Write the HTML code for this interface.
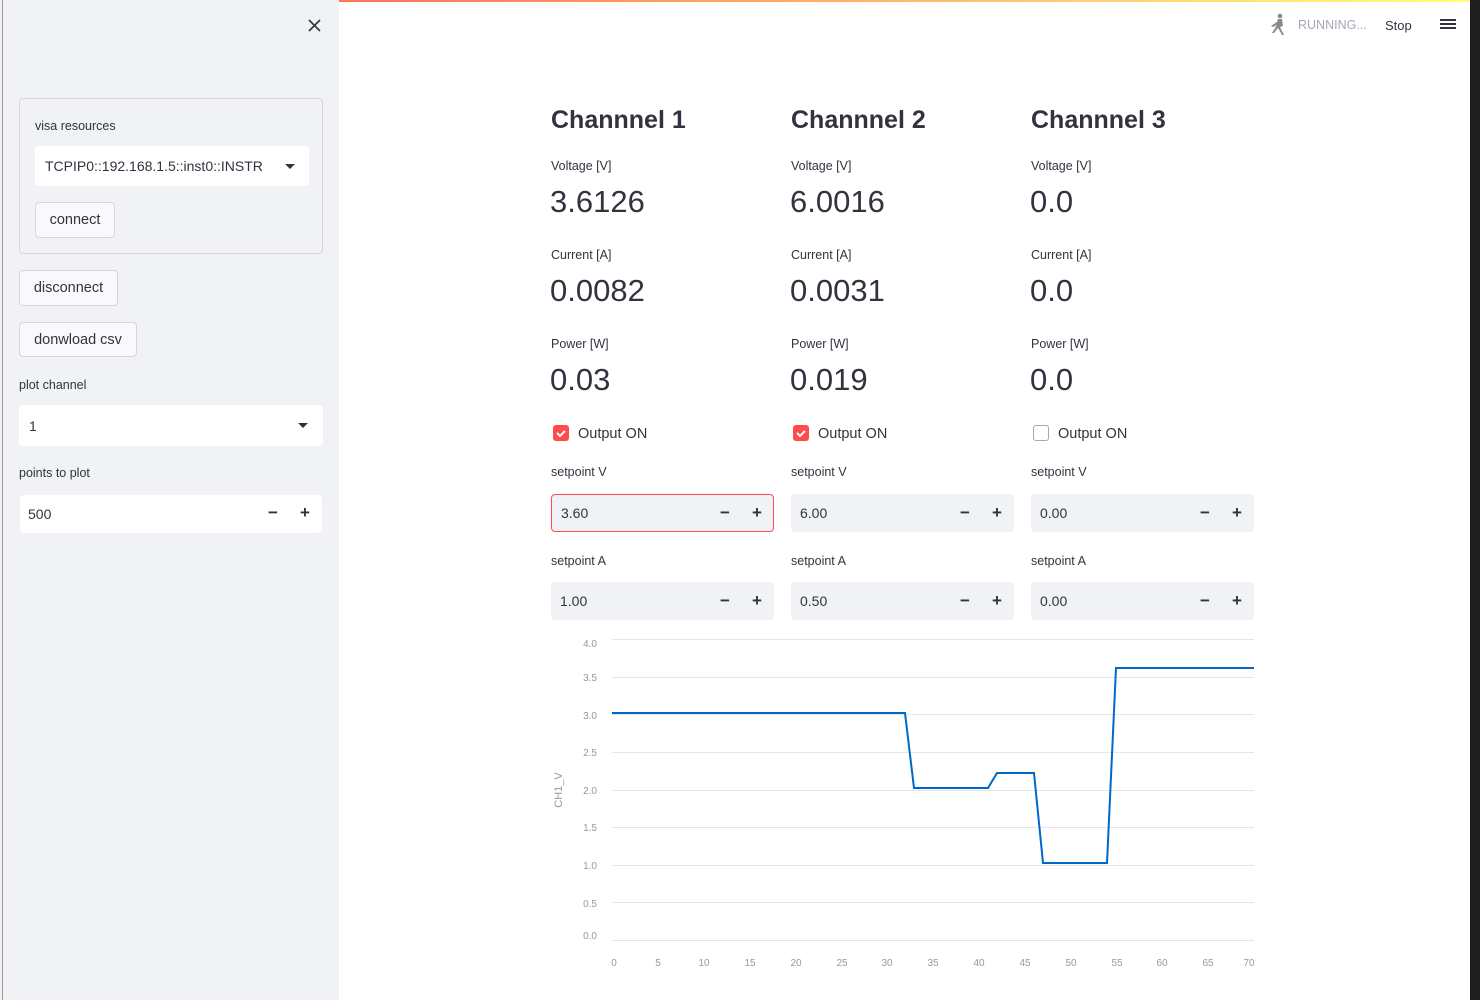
<!DOCTYPE html>
<html><head><meta charset="utf-8"><style>
*{box-sizing:border-box;margin:0;padding:0}
body{width:1480px;height:1000px;position:relative;overflow:hidden;background:#fff;font-family:"Liberation Sans",sans-serif;color:#31333f}
.a{position:absolute}
.top{left:0;top:0;width:1470px;height:2px;background:linear-gradient(90deg,#ff4b4b,#fffd80)}
.side{left:0;top:0;width:339px;height:1000px;background:#f0f2f6}
.edge{left:0;top:0;width:3px;height:1000px;background:#f0f2f6;border-right:1px solid #9a9a9a}
.strip{left:1470px;top:0;width:10px;height:1000px;background:#1e1e1e}
.lbl{font-size:12.5px;color:#31333f}
.btn{background:#f9f9fb;border:1px solid #d6d6d9;border-radius:4px;font-size:14.5px;display:flex;align-items:center;justify-content:center}
.inp{background:#fff;border-radius:4px;font-size:14px;display:flex;align-items:center;padding-left:10px}
.num{background:#f0f2f6;border-radius:4px;font-size:14px;display:flex;align-items:center;padding-left:9px;width:223px;height:38px}
.pm{position:absolute;font-size:17px;font-weight:bold;top:8px}
h2{position:absolute;font-size:25px;font-weight:bold;letter-spacing:0}
.val{position:absolute;font-size:31px;color:#31333f}
.cb{position:absolute;width:16px;height:16px;border-radius:3px}
.cbl{position:absolute;font-size:14.5px}
.tri{width:0;height:0;border-left:5px solid transparent;border-right:5px solid transparent;border-top:5px solid #31333f;position:absolute}
</style></head><body>
<div class="a top"></div>
<div class="a side"></div>
<div class="a edge"></div>
<div class="a strip"></div>
<svg class="a" style="left:308px;top:19px" width="13" height="13"><path d="M1 1L12 12M12 1L1 12" stroke="#31333f" stroke-width="1.6"/></svg>

<div class="a" style="left:19px;top:98px;width:304px;height:156px;border:1px solid #d6d6d9;border-radius:4px"></div>
<div class="a lbl" style="left:35px;top:119px">visa resources</div>
<div class="a inp" style="left:35px;top:146px;width:274px;height:40px;font-size:14px">TCPIP0::192.168.1.5::inst0::INSTR</div>
<div class="tri" style="left:285px;top:164px"></div>
<div class="a btn" style="left:35px;top:202px;width:80px;height:36px">connect</div>
<div class="a btn" style="left:19px;top:270px;width:99px;height:36px">disconnect</div>
<div class="a btn" style="left:19px;top:322px;width:118px;height:35px">donwload csv</div>
<div class="a lbl" style="left:19px;top:378px">plot channel</div>
<div class="a inp" style="left:19px;top:405px;width:304px;height:41px">1</div>
<div class="tri" style="left:298px;top:423px"></div>
<div class="a lbl" style="left:19px;top:466px">points to plot</div>
<div class="a inp" style="left:20px;top:495px;width:302px;height:38px;padding-left:8px">500</div>
<div class="pm" style="left:268px;top:503px">−</div><div class="pm" style="left:300px;top:503px">+</div>

<svg class="a" style="left:1266px;top:12px" width="22" height="26" viewBox="0 0 22 26"><g fill="#8a8a8a"><circle cx="14" cy="4" r="2.3"/><path d="M12 7h4l1 7-3 1 4 8h-2l-4-7-4 5H6l5-8-4 2-2-1 6-4z"/></g></svg>
<div class="a" style="left:1298px;top:18px;font-size:12.5px;color:#a3a8b8">RUNNING...</div>
<div class="a" style="left:1385px;top:18px;font-size:13px">Stop</div>
<div class="a" style="left:1440px;top:19px;width:16px;height:2px;background:#31333f;box-shadow:0 4px 0 #31333f,0 8px 0 #31333f"></div>

<div>
<h2 style="left:551px;top:106px">Channnel 1</h2>
<h2 style="left:791px;top:106px">Channnel 2</h2>
<h2 style="left:1031px;top:106px">Channnel 3</h2>
<div class="a lbl" style="left:551px;top:159px">Voltage [V]</div><div class="a lbl" style="left:791px;top:159px">Voltage [V]</div><div class="a lbl" style="left:1031px;top:159px">Voltage [V]</div>
<div class="val" style="left:550px;top:184px">3.6126</div><div class="val" style="left:790px;top:184px">6.0016</div><div class="val" style="left:1030px;top:184px">0.0</div>
<div class="a lbl" style="left:551px;top:248px">Current [A]</div><div class="a lbl" style="left:791px;top:248px">Current [A]</div><div class="a lbl" style="left:1031px;top:248px">Current [A]</div>
<div class="val" style="left:550px;top:273px">0.0082</div><div class="val" style="left:790px;top:273px">0.0031</div><div class="val" style="left:1030px;top:273px">0.0</div>
<div class="a lbl" style="left:551px;top:337px">Power [W]</div><div class="a lbl" style="left:791px;top:337px">Power [W]</div><div class="a lbl" style="left:1031px;top:337px">Power [W]</div>
<div class="val" style="left:550px;top:362px">0.03</div><div class="val" style="left:790px;top:362px">0.019</div><div class="val" style="left:1030px;top:362px">0.0</div>

<div class="cb" style="left:553px;top:425px;background:#ff4b4b"><svg width="16" height="16"><path d="M4 8l3 3 5-5" stroke="#fff" stroke-width="2" fill="none"/></svg></div>
<div class="cbl" style="left:578px;top:426px">Output ON</div>
<div class="cb" style="left:793px;top:425px;background:#ff4b4b"><svg width="16" height="16"><path d="M4 8l3 3 5-5" stroke="#fff" stroke-width="2" fill="none"/></svg></div>
<div class="cbl" style="left:818px;top:426px">Output ON</div>
<div class="cb" style="left:1033px;top:425px;border:1px solid #a3a8b8;background:#fff"></div>
<div class="cbl" style="left:1058px;top:426px">Output ON</div>

<div class="a lbl" style="left:551px;top:465px">setpoint V</div><div class="a lbl" style="left:791px;top:465px">setpoint V</div><div class="a lbl" style="left:1031px;top:465px">setpoint V</div>
<div class="a num" style="left:551px;top:494px;border:1px solid #ff4b4b">3.60</div>
<div class="a num" style="left:791px;top:494px">6.00</div>
<div class="a num" style="left:1031px;top:494px">0.00</div>
<div class="a lbl" style="left:551px;top:554px">setpoint A</div><div class="a lbl" style="left:791px;top:554px">setpoint A</div><div class="a lbl" style="left:1031px;top:554px">setpoint A</div>
<div class="a num" style="left:551px;top:582px">1.00</div>
<div class="a num" style="left:791px;top:582px">0.50</div>
<div class="a num" style="left:1031px;top:582px">0.00</div>
<div class="pm" style="left:720px;top:503px">−</div><div class="pm" style="left:752px;top:503px">+</div>
<div class="pm" style="left:960px;top:503px">−</div><div class="pm" style="left:992px;top:503px">+</div>
<div class="pm" style="left:1200px;top:503px">−</div><div class="pm" style="left:1232px;top:503px">+</div>
<div class="pm" style="left:720px;top:591px">−</div><div class="pm" style="left:752px;top:591px">+</div>
<div class="pm" style="left:960px;top:591px">−</div><div class="pm" style="left:992px;top:591px">+</div>
<div class="pm" style="left:1200px;top:591px">−</div><div class="pm" style="left:1232px;top:591px">+</div>
</div>

<svg class="a" style="left:540px;top:630px" width="730" height="350" font-family="Liberation Sans, sans-serif" font-size="10" fill="#999">
<g stroke="#e6e6e6" stroke-width="1">
<line x1="72" x2="714" y1="9.5" y2="9.5"/><line x1="72" x2="714" y1="47.5" y2="47.5"/><line x1="72" x2="714" y1="84.5" y2="84.5"/><line x1="72" x2="714" y1="122.5" y2="122.5"/><line x1="72" x2="714" y1="160.5" y2="160.5"/><line x1="72" x2="714" y1="197.5" y2="197.5"/><line x1="72" x2="714" y1="235.5" y2="235.5"/><line x1="72" x2="714" y1="272.5" y2="272.5"/><line x1="72" x2="714" y1="310.5" y2="310.5"/>
</g>
<g text-anchor="end"><text x="57" y="17">4.0</text><text x="57" y="51">3.5</text><text x="57" y="89">3.0</text><text x="57" y="126">2.5</text><text x="57" y="164">2.0</text><text x="57" y="201">1.5</text><text x="57" y="239">1.0</text><text x="57" y="277">0.5</text><text x="57" y="309">0.0</text></g>
<g text-anchor="middle"><text x="74" y="336">0</text><text x="118" y="336">5</text><text x="164" y="336">10</text><text x="210" y="336">15</text><text x="256" y="336">20</text><text x="302" y="336">25</text><text x="347" y="336">30</text><text x="393" y="336">35</text><text x="439" y="336">40</text><text x="485" y="336">45</text><text x="531" y="336">50</text><text x="577" y="336">55</text><text x="622" y="336">60</text><text x="668" y="336">65</text><text x="709" y="336">70</text></g>
<text x="0" y="0" transform="translate(22,160) rotate(-90)" text-anchor="middle" font-size="11">CH1_V</text>
<polyline fill="none" stroke="#0068c9" stroke-width="2" points="72,83 365,83 374,158 448,158 457,143 494,143 503,233 567,233 576,38 714,38"/>
</svg>
</body></html>
